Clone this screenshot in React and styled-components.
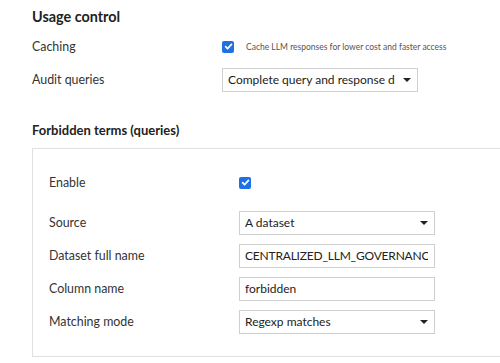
import React from "react";
import styled, { createGlobalStyle } from "styled-components";

const GlobalStyle = createGlobalStyle`
  body {
    margin: 0;
    background: #fff;
    overflow: hidden;
    font-family: "Lato", "Noto Sans", sans-serif;
    color: #333;
  }
`;

const Page = styled.div`
  padding: 7px 0 0 32px;
`;

const SectionTitle = styled.h2`
  margin: ${props => props.$top || 0}px 0 0;
  font-size: 14.4px;
  line-height: 20px;
  font-weight: 700;
  color: #222;
`;

const SubTitle = styled(SectionTitle)`
  font-size: 13px;
`;

const Row = styled.div`
  display: grid;
  grid-template-columns: 190px 1fr;
  align-items: center;
  height: 33px;
  margin-top: ${props => props.$gap || 0}px;
`;

const Label = styled.div`
  font-size: 12.4px;
  color: #333;
`;

const Inline = styled.div`
  display: flex;
  align-items: center;
  gap: 12px;
`;

const Hint = styled.span`
  font-size: 8.5px;
  color: #555;
`;

const Box = styled.span`
  width: 12px;
  height: 12px;
  border-radius: 2px;
  background: #1f6fe5;
  display: inline-flex;
  align-items: center;
  justify-content: center;
`;

const Field = styled.div`
  box-sizing: border-box;
  width: 196px;
  height: 24px;
  border: 1px solid #cfcfcf;
  background: #fff;
  padding: 0 6px 0 5px;
  display: flex;
  align-items: center;
  gap: 8px;
  font-size: 12px;
  color: #222;
`;

const Value = styled.span`
  flex: 1;
  min-width: 0;
  white-space: nowrap;
  overflow: hidden;
  letter-spacing: ${props => (props.$tight ? "-0.2px" : "0")};
`;

const Caret = styled.span`
  flex: none;
  border-left: 4px solid transparent;
  border-right: 4px solid transparent;
  border-top: 4px solid #222;
`;

const Panel = styled.div`
  margin: 8px -40px 0 0;
  border: 1px solid #e0e0e0;
  padding: 17px 16px 18px;
`;

const Check = () => (
  <Box>
    <svg width="9" height="9" viewBox="0 0 10 10">
      <path d="M1.8 5.2 L4 7.4 L8.3 2.6" fill="none" stroke="#fff" strokeWidth="1.9" strokeLinecap="round" strokeLinejoin="round" />
    </svg>
  </Box>
);

const Select = ({ children }) => (
  <Field>
    <Value>{children}</Value>
    <Caret />
  </Field>
);

const Input = ({ children, tight }) => (
  <Field>
    <Value $tight={tight}>{children}</Value>
  </Field>
);

export default function App() {
  return (
    <Page>
      <GlobalStyle />
      <SectionTitle>Usage control</SectionTitle>
      <Row $gap={3}>
        <Label>Caching</Label>
        <Inline>
          <Check />
          <Hint>Cache LLM responses for lower cost and faster access</Hint>
        </Inline>
      </Row>
      <Row>
        <Label>Audit queries</Label>
        <Select>Complete query and response data</Select>
      </Row>

      <SubTitle $top={24}>Forbidden terms (queries)</SubTitle>
      <Panel>
        <Row>
          <Label>Enable</Label>
          <Inline>
            <Check />
          </Inline>
        </Row>
        <Row $gap={7}>
          <Label>Source</Label>
          <Select>A dataset</Select>
        </Row>
        <Row>
          <Label>Dataset full name</Label>
          <Input tight>CENTRALIZED_LLM_GOVERNANCE.forbidden_terms</Input>
        </Row>
        <Row>
          <Label>Column name</Label>
          <Input>forbidden</Input>
        </Row>
        <Row>
          <Label>Matching mode</Label>
          <Select>Regexp matches</Select>
        </Row>
      </Panel>
    </Page>
  );
}
